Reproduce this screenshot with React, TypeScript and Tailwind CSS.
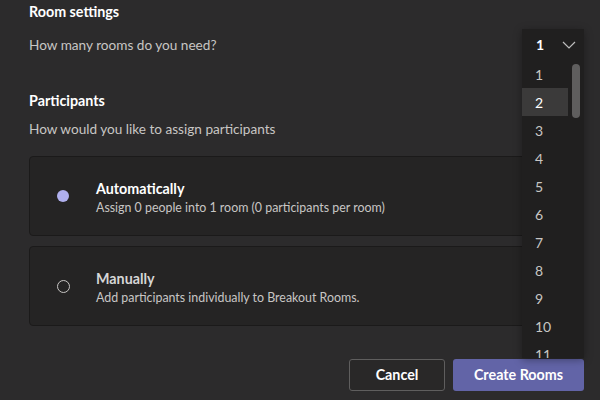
import React from "react";

const font = { fontFamily: 'Lato, "Noto Sans", sans-serif' };

export default function App() {
  const items = [1, 2, 3, 4, 5, 6, 7, 8, 9, 10, 11];
  return (
    <div className="w-[600px] h-[400px] overflow-hidden bg-[#2c2b2c] relative" style={font}>
      <div className="pl-[29px] pr-[16px] pt-[2px]">
        <div className="text-[14.3px] leading-[20px] font-bold text-white">Room settings</div>
        <div className="mt-[7px] flex items-center justify-between h-[32px]">
          <div className="text-[13.6px] text-[#c8c6c4]">How many rooms do you need?</div>
          <div className="relative w-[62px] h-[32px]">
            <div className="absolute left-0 top-0 w-[62px] h-[329px] bg-[#201f1f] overflow-hidden z-10 shadow-[0_2px_8px_rgba(0,0,0,0.35)]">
              <div className="h-[31px] flex items-center justify-between pl-[14px] pr-[8px]">
                <span className="text-[14px] font-bold text-white">1</span>
                <svg width="14" height="8" viewBox="0 0 14 8" fill="none">
                  <path d="M1 1l6 6 6-6" stroke="#bdbdbd" strokeWidth="1.2" />
                </svg>
              </div>
              <div className="flex flex-col">
                {items.map((n) => (
                  <div
                    key={n}
                    className={`h-[28px] w-[46px] flex items-center pl-[13px] text-[14px] ${
                      n === 2 ? "bg-[#3b3a3a] text-white" : "text-[#c8c6c4]"
                    }`}
                  >
                    {n}
                  </div>
                ))}
              </div>
              <div className="absolute left-[50px] top-[35px] w-[8px] h-[54px] rounded-full bg-[#5f5e5e]" />
            </div>
          </div>
        </div>
        <div className="mt-[30px] text-[14.3px] leading-[20px] font-bold text-white">Participants</div>
        <div className="mt-[8px] text-[13.6px] leading-[20px] text-[#c8c6c4]">How would you like to assign participants</div>
        <div className="mt-[17px] flex flex-col gap-[10px]">
          <div className="h-[80px] rounded-[4px] border border-[#1b1a1a] bg-[#252424] flex items-center">
            <div className="w-[66px] flex justify-center">
              <div className="w-[12px] h-[12px] rounded-full bg-[#b0b0ee]" />
            </div>
            <div className="flex flex-col pt-[4px]">
              <div className="text-[14.3px] leading-[19px] font-bold text-white">Automatically</div>
              <div className="text-[12.4px] leading-[19px] text-[#c8c6c4]">Assign 0 people into 1 room (0 participants per room)</div>
            </div>
          </div>
          <div className="h-[80px] rounded-[4px] border border-[#1b1a1a] bg-[#252424] flex items-center">
            <div className="w-[66px] flex justify-center">
              <div className="w-[13px] h-[13px] rounded-full border-[1.5px] border-[#c8c6c4]" />
            </div>
            <div className="flex flex-col pt-[4px]">
              <div className="text-[14.3px] leading-[19px] font-bold text-[#d6d6d6]">Manually</div>
              <div className="text-[12.4px] leading-[19px] text-[#c8c6c4]">Add participants individually to Breakout Rooms.</div>
            </div>
          </div>
        </div>
        <div className="mt-[33px] flex justify-end gap-[8px]">
          <button className="w-[96px] h-[32px] rounded-[3px] border border-[#5f5e5e] bg-[#292828] text-[14.3px] font-bold text-white">
            Cancel
          </button>
          <button className="w-[131px] h-[32px] rounded-[3px] bg-[#6264a7] text-[14.3px] font-bold text-white">
            Create Rooms
          </button>
        </div>
      </div>
    </div>
  );
}
